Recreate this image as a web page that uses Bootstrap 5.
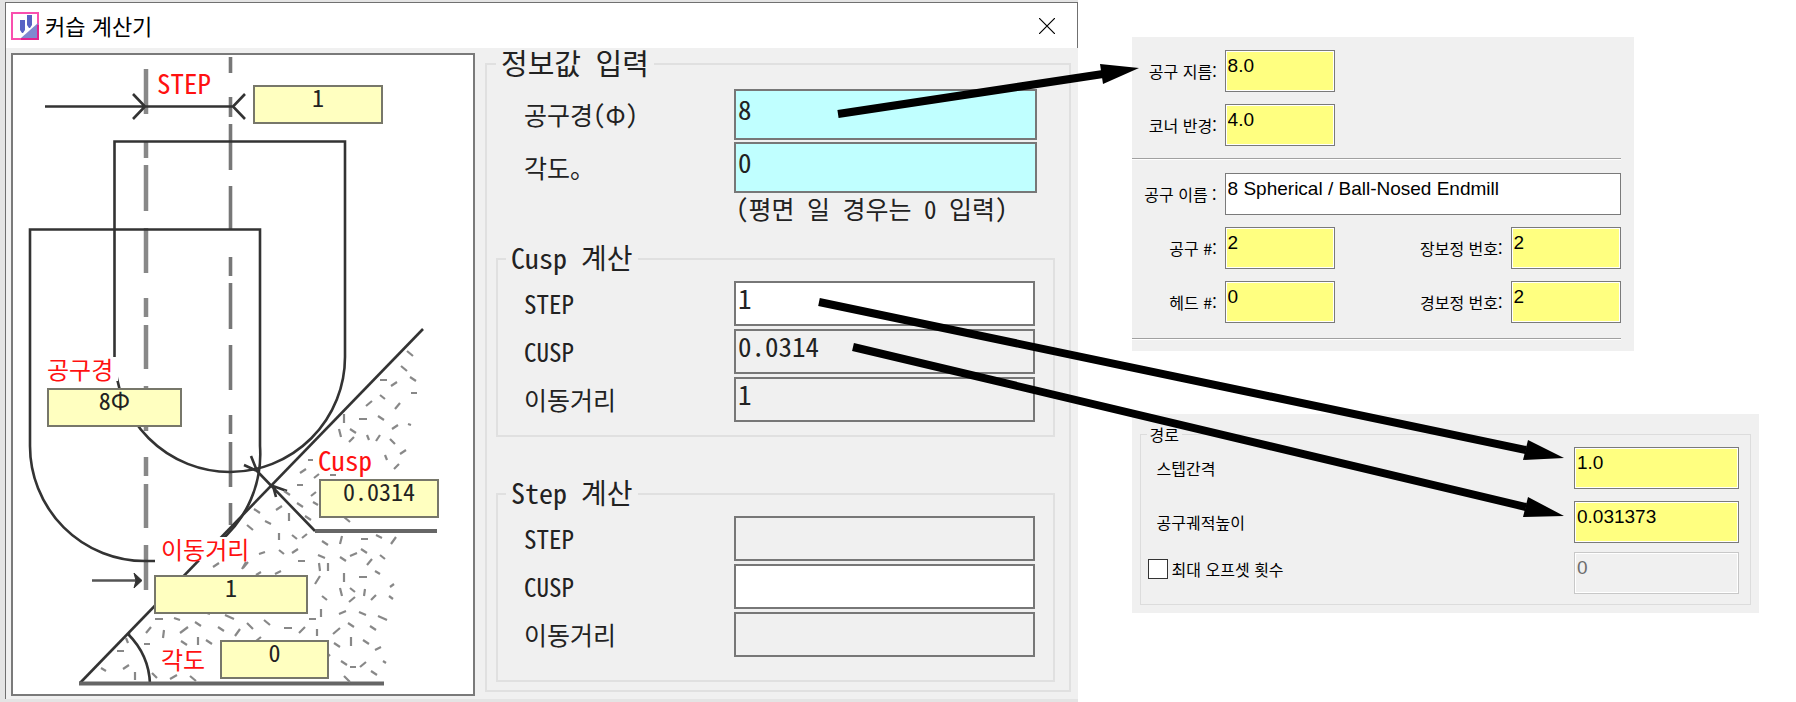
<!DOCTYPE html>
<html lang="ko">
<head>
<meta charset="utf-8">
<meta name="viewport" content="width=device-width, initial-scale=1">
<title>커습 계산기</title>
<link href="https://cdn.jsdelivr.net/npm/bootstrap@5.3.0/dist/css/bootstrap.min.css" rel="stylesheet">
<script src="https://cdn.jsdelivr.net/npm/bootstrap@5.3.0/dist/js/bootstrap.bundle.min.js"></script>
<style>
  body { font-family: "Noto Sans CJK KR", sans-serif; color: #000; background: #fff; }
  fieldset { border: 2px solid #e0e0e0; }
  legend { float: none; width: auto; margin: 0; }
  input { border-radius: 0; outline: 0; min-width: 0; }

  /* calculator window */
  .calc-shadow { flex: 0 0 60%; padding: 2px 0 0 5px; background: #e4e4e4; min-height: 100vh; }
  .calc-window { border: 1px solid #707070; border-width: 1px 0 0 1px; background: #f0f0f0; }
  .title-bar { height: 45px; padding: 0 18px 0 5px; column-gap: 6px; background: #fff; border-right: 1px solid #707070; }
  .title-bar h1 { font-size: 22px; line-height: 26px; height: 28px; font-weight: 400; }
  .close-btn { border: 0; background: none; width: 24px; height: 24px; }
  .mono { font-family: "Noto Sans Mono CJK KR", "Noto Sans CJK KR", monospace; font-weight: 300; color: #222; }

  /* tool diagram with its value boxes */
  .diagram { width: 464px; height: 643px; margin: 5px 0 0 5px; border: 2px solid #7a7a7a; background: #fff; }
  .diagram svg { left: -2px; top: -2px; }
  .tag { position: absolute; color: #f11; font-size: 24px; line-height: 24px; white-space: nowrap; }
  .tag-bg { background: #fff; padding-right: 5px; }
  .val { position: absolute; height: 39px; border: 2px solid #77776a; background: #ffffc0; padding: 0 0 15px; font-size: 24px; line-height: 20px; text-align: center; }
  .t-step { left: 144px; top: 16px; }  .v-step { left: 240px; top: 30px; width: 130px; }
  .t-dia { left: 34px; top: 302px; }   .v-dia { left: 34px; top: 333px; width: 135px; }
  .t-cusp { left: 305px; top: 393px; } .v-cusp { left: 306px; top: 424px; width: 120px; }
  .t-move { left: 148px; top: 482px; } .v-move { left: 141px; top: 520px; width: 154px; }
  .t-ang { left: 148px; top: 592px; }  .v-ang { left: 207px; top: 585px; width: 109px; }
  .t-step, .t-cusp { font-size: 27px; }

  /* input form */
  .group-main { margin: 0 7px 7px 10px; padding: 0 14px 8px 9px; }
  .group-main > legend { padding: 0 5px; font-size: 29px; line-height: 28px; height: 32px; }
  .group-sub > legend { margin-left: -18px; padding: 0 5px; font-size: 28px; line-height: 28px; height: 32px; }
  .group-sub { padding: 0 18px 13px 26px; }
  .group-step { margin-top: 41px; padding-bottom: 23px; }
  .rows-main { display: grid; row-gap: 2px; padding: 9px 18px 22px 28px; }
  .rows-sub { display: grid; row-gap: 3px; padding-top: 6px; }
  .frow > label { flex: 0 0 210px; font-size: 25px; line-height: 26px; height: 28px; }
  .frow > input { flex: 1 1 0; border: 2px solid #777; background: #f0f0f0; padding: 0 2px 13px; height: 45px; font-size: 27px; line-height: 28px; }
  .rows-main .frow > input { height: 51px; background: #c0ffff; padding: 3px 2px 16px; }
  .frow > input.open { background: #fff; }
  .hint { margin: 0 0 0 212px; font-size: 25px; line-height: 26px; white-space: nowrap; }

  /* CAM panels */
  .side { padding: 37px 37px 0 54px; }
  .panel { background: #f0f0f0; font-size: 16px; line-height: 20px; }
  .panel-tool { width: 80%; padding: 13px 0 12px; margin-bottom: 63px; }
  .cam { height: 42px; border: 1px solid #7a7a7a; box-shadow: inset 0 0 0 1px #fff; background: #ffff80; padding: 5px 3px 15px 2px; font: 19px/20px "Liberation Sans", sans-serif; color: #000; }
  .cam-white { background: #fff; }
  .cam:disabled { border-color: #c8c8c8; background: #f0f0f0; color: #6d6d6d; }
  .tool-grid { display: grid; grid-template-columns: 85px 110px 1fr 110px; column-gap: 8px; row-gap: 12px; align-items: center; margin-right: 13px; }
  .tool-grid label { text-align: right; white-space: nowrap; }
  .wide { grid-column: 2 / 5; }
  .rule { height: 2px; margin: 12px 13px 13px 0; background: #a0a0a0; border-bottom: 1px solid #fff; }
  .rule-end { margin: 15px 13px 0 0; }
  .panel-tool { padding-bottom: 11px; }
  .panel-path { padding: 10px 8px 8px; }
  .panel-path fieldset { border-width: 1px; border-color: #dcdcdc; padding: 3px 11px 10px 7px; }
  .panel-path legend { font-size: 16px; line-height: 20px; padding: 0 3px; margin-left: -1px; }
  .prow { padding-left: 9px; }
  .prow + .prow { margin-top: 12px; }
  .prow + .prow-tick { margin-top: 9px; padding-left: 0; }
  .prow .cam { width: 165px; }
  .tick { appearance: none; width: 20px; height: 20px; border: 1px solid #333; background: #fff; margin: 0; }

  .arrows { position: absolute; left: 0; top: 0; width: 100%; height: 702px; pointer-events: none; }
</style>
</head>
<body>
<main class="position-relative d-flex align-items-start">
  <div class="calc-shadow">
    <section class="calc-window">
      <header class="title-bar d-flex align-items-center">
        <svg width="28" height="28" viewBox="0 0 28 28" aria-hidden="true">
          <rect x="1" y="1" width="26" height="26" fill="#fff" stroke="#f94fae" stroke-width="2"/>
          <path d="M10 26 27 11V27H10z" fill="#7f88d0"/>
          <path d="M9 8h5v10l-2 3h-1l-2-3zM16 3h5v10l-2 3h-1l-2-3z" fill="#5862c4"/>
          <path d="M10 27h17V13" fill="none" stroke="#e0218f" stroke-width="2"/>
        </svg>
        <h1 class="m-0 flex-grow-1">커습 계산기</h1>
        <button type="button" class="close-btn p-0 d-flex align-items-center justify-content-center" aria-label="닫기">
          <svg width="16" height="16" viewBox="0 0 16 16"><path d="M0 0l16 16M16 0l-16 16" stroke="#000" stroke-width="1.200"/></svg>
        </button>
      </header>

      <div class="d-flex align-items-start mono">
        <div class="diagram position-relative flex-shrink-0">
          <svg class="position-absolute" width="464" height="643" viewBox="11 53 464 643" fill="none" aria-hidden="true">
            <g stroke="#888" stroke-width="4.500">
              <path d="M146 69v45M146 141v17M146 165v46M146 228v45M146 298v19M146 325v44M146 386v45M146 457v19M146 484v44M146 545v45"/>
              <path stroke-width="3.600" stroke="#777" d="M230.500 57v16M230.500 97v20M230.500 124v46M230.500 186v43M230.500 257v19M230.500 283v46M230.500 345v45M230.500 415v19M230.500 442v45M230.500 503v22"/>
            </g>
            <g stroke="#333" stroke-width="2.600">
              <path d="M45 106.500H233M133 94l12 12.500-12 12.500M245 94l-12 12.500 12 12.500"/>
              <path d="M114.500 357V141.500H345V357A115 115 0 0 1 115 357"/>
              <path d="M155 561h-10A115 115 0 0 1 30 446V229.500H260V446A115 115 0 0 1 218 543"/>
              <path d="M80 683 423 329"/>
              <path d="M128 634Q149 655 150 684M128 634l2 1"/>
              <path d="M315 531l-58-60M244 465l13 6-6-15M276 497l-3-11 14 5"/>
              <path d="M92 580.500H141" stroke="#555"/>
              <path d="M134 573l8 7.500-8 7.500 2-7.500z" fill="#333" stroke-width="1"/>
            </g>
            <path d="M437 531H315M79 683.500H384" stroke="#666" stroke-width="4"/>
            <g stroke="#888" stroke-width="2.200">
              <path transform="translate(-3 -2)" d="M410 353l6 5M404 368l6 5M413 379l6 4M383 397l5 4M381 418l6 4M353 431l6 4M393 441l5 5M316 504l5 3M287 493l6 4M300 505l6 4M257 511l6 4M268 523l6 3M308 518l6 4M347 519l6 5M250 527l6 5M295 537l5 4M325 543l6 4M379 537l6 3M282 552l5 4M321 557l7 3M343 559l6 4M364 551l6 4M383 557l5 4M378 573l5 3M353 590l5 4M392 598l4 3M325 598l5 4M362 614l7 3M381 618l9 4M373 628l6 4M351 625l6 4M337 645l6 4M267 622l6 5M250 625l6 6M228 617l9 4M207 614l6 2M221 629l6 4M198 624l6 4M177 620l6 2M184 643l6 4M209 642l6 4M104 670l5 3M155 675l5 5M193 678l6 5M366 642l6 4M344 663l6 4M374 673l6 4M347 678l6 6M330 655l3 3M411 426l3 1M386 663l3 2"/>
              <path transform="translate(-3 2)" d="M394 384l6-4M369 404l6-5M398 407l5-6M395 427l6-4M352 440l5-5M379 439l4-6M403 452l6-4M397 467l5-5M303 471l6-4M317 476l5-4M314 494l5-4M279 508l6-4M305 536l5-4M394 542l5-7M262 552l6-2M295 551l6-4M353 554l7-3M370 563l5-6M245 567l4-7M278 572l6-3M216 565l6-4M246 566l5-6M259 573l5-3M318 582l5-8M393 585l4-3M352 600l6-5M374 598l5-5M342 612l7-3M336 632l7-6M302 631l6-6M238 634l5-7M259 639l5-4M149 631l5-6M183 631l8-6M126 667l6-4M173 677l7-4M378 648l6-3M363 665l6-5"/>
              <path transform="translate(-3 0)" d="M383 380h7M414 393h6M362 419h8M311 460h5M333 475h6M300 485h6M364 539h7M301 561h7M362 577h8M312 619h7M287 628h8M158 619h8M147 644h6M120 651h7M353 667h6"/>
              <path transform="translate(0 -4)" d="M344 418v9M339 433l2 8M367 439l2 5M385 459l2 5M289 517v8M279 537v7M342 540l-2 8M319 567l1 8M328 567v8M344 577v9M340 592l2 8M365 593l-1 7M321 613v8M351 641v9M317 633v7M164 634l-1 8M198 641v8M135 676v8M126 642l2 5"/>
            </g>
          </svg>
          <span class="tag t-step">STEP</span><output class="val v-step">1</output>
          <span class="tag tag-bg t-dia">공구경</span><output class="val v-dia">8Φ</output>
          <span class="tag tag-bg t-cusp">Cusp</span><output class="val v-cusp">0.0314</output>
          <span class="tag tag-bg t-move">이동거리</span><output class="val v-move">1</output>
          <span class="tag tag-bg t-ang">각도</span><output class="val v-ang">0</output>
        </div>

        <fieldset class="group-main flex-grow-1">
          <legend>정보값 입력</legend>
          <div class="rows-main">
            <div class="frow d-flex align-items-center"><label for="dia">공구경(Φ)</label><input id="dia" class="mono" value="8"></div>
            <div class="frow d-flex align-items-center"><label for="ang">각도。</label><input id="ang" class="mono" value="0"></div>
            <p class="hint">(평면 일 경우는 0 입력)</p>
          </div>
          <fieldset class="group-sub">
            <legend>Cusp 계산</legend>
            <div class="rows-sub">
              <div class="frow d-flex align-items-center"><label for="c1">STEP</label><input id="c1" class="mono open" value="1"></div>
              <div class="frow d-flex align-items-center"><label for="c2">CUSP</label><input id="c2" class="mono" value="0.0314" readonly></div>
              <div class="frow d-flex align-items-center"><label for="c3">이동거리</label><input id="c3" class="mono" value="1" readonly></div>
            </div>
          </fieldset>
          <fieldset class="group-sub group-step">
            <legend>Step 계산</legend>
            <div class="rows-sub">
              <div class="frow d-flex align-items-center"><label for="s1">STEP</label><input id="s1" class="mono" readonly></div>
              <div class="frow d-flex align-items-center"><label for="s2">CUSP</label><input id="s2" class="mono open"></div>
              <div class="frow d-flex align-items-center"><label for="s3">이동거리</label><input id="s3" class="mono" readonly></div>
            </div>
          </fieldset>
        </fieldset>
      </div>
    </section>
  </div>

  <div class="side flex-grow-1">
    <section class="panel panel-tool">
      <div class="tool-grid">
        <label for="t1">공구 지름:</label><input id="t1" class="cam" value="8.0"><span></span><span></span>
        <label for="t2">코너 반경:</label><input id="t2" class="cam" value="4.0">
      </div>
      <div class="rule"></div>
      <div class="tool-grid">
        <label for="t3">공구 이름 :</label><input id="t3" class="cam cam-white wide" value="8 Spherical / Ball-Nosed Endmill">
        <label for="t4">공구 #:</label><input id="t4" class="cam" value="2">
        <label for="t5">장보정 번호:</label><input id="t5" class="cam" value="2">
        <label for="t6">헤드 #:</label><input id="t6" class="cam" value="0">
        <label for="t7">경보정 번호:</label><input id="t7" class="cam" value="2">
      </div>
      <div class="rule rule-end"></div>
    </section>

    <section class="panel panel-path">
      <fieldset>
        <legend>경로</legend>
        <div class="prow d-flex align-items-center justify-content-between"><label for="p1">스텝간격</label><input id="p1" class="cam" value="1.0"></div>
        <div class="prow d-flex align-items-center justify-content-between"><label for="p2">공구궤적높이</label><input id="p2" class="cam" value="0.031373"></div>
        <div class="prow prow-tick d-flex align-items-center justify-content-between">
          <div class="d-flex align-items-center gap-1 mb-2"><input type="checkbox" id="p3" class="tick"><label for="p3">최대 오프셋 횟수</label></div>
          <input class="cam" value="0" disabled aria-label="최대 오프셋 횟수">
        </div>
      </fieldset>
    </section>
  </div>

  <svg class="arrows" viewBox="0 0 1796 702" preserveAspectRatio="none" aria-hidden="true">
    <path d="M838 114 1103 74M819 302 1526 450M853 347 1526 507" stroke="#000" stroke-width="8"/>
    <path d="M1100 64 1139 68 1103 84zM1528 440 1564 458 1523 460zM1528 497 1564 516 1523 517z"/>
  </svg>
</main>
</body>
</html>
